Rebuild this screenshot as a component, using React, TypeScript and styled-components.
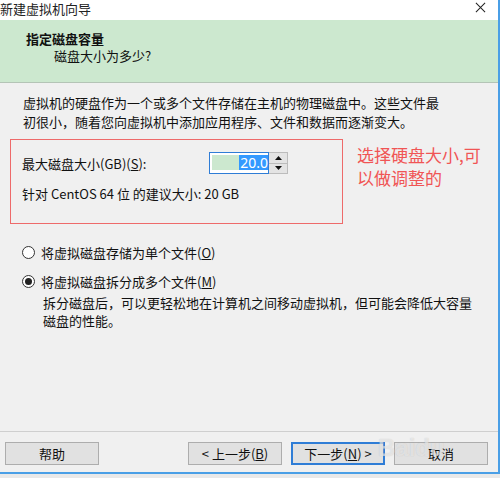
import styled, { createGlobalStyle } from 'styled-components'

const GlobalStyle = createGlobalStyle`
  html, body {
    margin: 0;
    padding: 0;
    background: #e9e9e9;
  }
  body {
    font-family: "Noto Sans CJK SC", "Noto Sans", sans-serif;
    font-size: 13px;
    color: #111;
  }
`

export default function App() {
  return (
    <>
      <GlobalStyle />
      <Window>
        <TitleBar>
          <span>新建虚拟机向导</span>
          <CloseIcon viewBox="0 0 12 12">
            <path d="M1 1 L11 11 M11 1 L1 11" stroke="#222" strokeWidth="1.1" />
          </CloseIcon>
        </TitleBar>

        <Header>
          <HeaderTitle>指定磁盘容量</HeaderTitle>
          <HeaderSub>磁盘大小为多少?</HeaderSub>
        </Header>

        <Body>
          <Intro>
            虚拟机的硬盘作为一个或多个文件存储在主机的物理磁盘中。这些文件最
            <br />
            初很小，随着您向虚拟机中添加应用程序、文件和数据而逐渐变大。
          </Intro>

          <SizeRow>
            <SizeBox>
              <FieldRow>
                <Label>
                  最大磁盘大小(GB)(<u>S</u>):
                </Label>
                <Spin>
                  <SpinInput>
                    <SpinFill>
                      <Selected>20.0</Selected>
                    </SpinFill>
                  </SpinInput>
                  <SpinButtons>
                    <SpinButton>
                      <Arrow viewBox="0 0 7 4">
                        <path d="M0 4 L3.5 0 L7 4 Z" fill="#111" />
                      </Arrow>
                    </SpinButton>
                    <SpinButton>
                      <Arrow viewBox="0 0 7 4">
                        <path d="M0 0 L3.5 4 L7 0 Z" fill="#111" />
                      </Arrow>
                    </SpinButton>
                  </SpinButtons>
                </Spin>
              </FieldRow>
              <Hint>针对 CentOS 64 位 的建议大小: 20 GB</Hint>
            </SizeBox>
            <Note>
              选择硬盘大小,可
              <br />
              以做调整的
            </Note>
          </SizeRow>

          <Options>
            <Option>
              <Radio checked={false} />
              <span>
                将虚拟磁盘存储为单个文件(<u>O</u>)
              </span>
            </Option>
            <Option>
              <Radio checked />
              <span>
                将虚拟磁盘拆分成多个文件(<u>M</u>)
              </span>
            </Option>
            <OptionNote>
              拆分磁盘后，可以更轻松地在计算机之间移动虚拟机，但可能会降低大容量
              <br />
              磁盘的性能。
            </OptionNote>
          </Options>
        </Body>

        <Footer>
          <Button>帮助</Button>
          <Spacer />
          <Button>
            &lt; 上一步(<u>B</u>)
          </Button>
          <Button focused>
            下一步(<u>N</u>) &gt;
          </Button>
          <Button>取消</Button>
          <Watermark>Baidu</Watermark>
        </Footer>
      </Window>
    </>
  )
}

const Window = styled.div`
  width: 500px;
  height: 474px;
  box-sizing: border-box;
  display: flex;
  flex-direction: column;
  background: #f0f0f0;
  border-right: 2px solid #4a9fe6;
  border-bottom: 2px solid #4a9fe6;
`

const TitleBar = styled.div`
  height: 20px;
  display: flex;
  align-items: flex-start;
  justify-content: space-between;
  background: #fff;
  line-height: 17px;
  font-size: 13px;
  color: #222;
  padding-right: 12px;
`

const CloseIcon = styled.svg`
  width: 11px;
  height: 11px;
  margin-top: 2px;
`

const Header = styled.div`
  height: 63px;
  box-sizing: border-box;
  padding-top: 10px;
  background: #cce8cf;
  border-bottom: 1px solid #b4c4b6;
  line-height: 17px;
`

const HeaderTitle = styled.div`
  padding-left: 26px;
  font-weight: bold;
`

const HeaderSub = styled.div`
  padding-left: 54px;
`

const Body = styled.div`
  flex: 1;
  display: flex;
  flex-direction: column;
`

const Intro = styled.p`
  margin: 10px 0 0 23px;
  line-height: 19px;
`

const SizeRow = styled.div`
  display: flex;
  align-items: flex-start;
  gap: 14px;
  margin: 8px 0 0 10px;
`

const SizeBox = styled.div`
  width: 333px;
  height: 85px;
  box-sizing: border-box;
  border: 1.5px solid #ee6a6a;
  padding: 12px 0 0 11px;
`

const FieldRow = styled.div`
  display: flex;
  align-items: center;
`

const Label = styled.span`
  width: 187px;
  line-height: 17px;
`

const Spin = styled.div`
  display: flex;
  height: 22px;
`

const SpinInput = styled.div`
  width: 60px;
  box-sizing: border-box;
  border: 1px solid #2f7dd6;
  background: #fff;
  padding: 2px 0 3px 2px;
`

const SpinFill = styled.div`
  height: 15px;
  display: flex;
  justify-content: flex-end;
  background: #cce8cf;
`

const Selected = styled.span`
  background: #3399ff;
  color: #fff;
  font-family: "Noto Sans", sans-serif;
  font-size: 14px;
  line-height: 15px;
  padding: 0 0 0 1px;
`

const SpinButtons = styled.div`
  width: 18px;
  display: flex;
  flex-direction: column;
  border: 1px solid #bcbcbc;
  border-left: none;
  background: #e4e4e4;
`

const SpinButton = styled.div`
  flex: 1;
  display: flex;
  align-items: center;
  justify-content: center;
  & + & {
    border-top: 1px solid #bcbcbc;
  }
`

const Arrow = styled.svg`
  width: 7px;
  height: 4px;
`

const Hint = styled.div`
  margin-top: 11px;
  line-height: 17px;
`

const Note = styled.div`
  color: #f05555;
  font-size: 17px;
  line-height: 23px;
  margin-top: 4px;
`

const Options = styled.div`
  display: flex;
  flex-direction: column;
  margin: 19px 0 0 22px;
  line-height: 19px;
`

const Option = styled.label`
  display: flex;
  align-items: center;
  gap: 6px;
  height: 19px;
  & + & {
    margin-top: 10px;
  }
`

const Radio = styled.span<{ checked: boolean }>`
  width: 13px;
  height: 13px;
  box-sizing: border-box;
  border: 1px solid #333;
  border-radius: 50%;
  background: #fff;
  display: flex;
  align-items: center;
  justify-content: center;
  &::after {
    content: '';
    width: 7px;
    height: 7px;
    border-radius: 50%;
    background: ${props => (props.checked ? '#222' : 'transparent')};
  }
`

const OptionNote = styled.div`
  margin: 3px 0 0 21px;
  line-height: 18px;
`

const Footer = styled.div`
  position: relative;
  display: flex;
  align-items: center;
  gap: 9px;
  height: 41px;
  box-sizing: border-box;
  padding: 10px 10px 8px 5px;
  border-top: 1px solid #cfcfcf;
`

const Spacer = styled.div`
  flex: 1;
`

const Button = styled.div<{ focused?: boolean }>`
  width: 94px;
  height: 23px;
  box-sizing: border-box;
  display: flex;
  align-items: center;
  justify-content: center;
  background: #e1e1e1;
  border: ${props => (props.focused ? '2px solid #2f7dd6' : '1px solid #adadad')};
  font-size: 13px;
`

const Watermark = styled.div`
  position: absolute;
  left: 378px;
  top: 2px;
  font-family: "Liberation Sans", sans-serif;
  font-size: 24px;
  font-weight: bold;
  color: rgba(255, 255, 255, 0.5);
  text-shadow: 0 0 1px rgba(150, 150, 150, 0.45);
  pointer-events: none;
`
